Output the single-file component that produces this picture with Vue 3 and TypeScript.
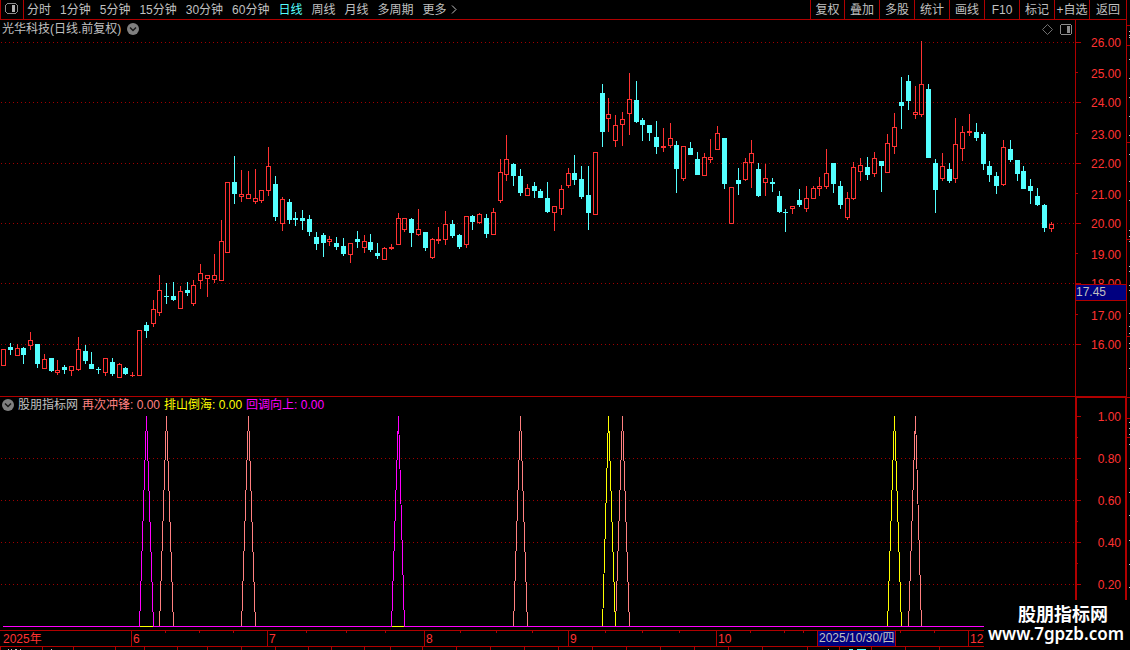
<script setup lang="ts">
import { ref } from 'vue'

type Direction = 'u' | 'd'
type Candle = [x: number, high: number, top: number, bottom: number, low: number, dir: Direction]

interface Mark {
  y: number
  text: string
}
interface Signal {
  name: string
  tone: string
  value: string
}
interface Spike {
  tone: string
  left: number
  peak: number
  right: number
}

const periods = ['分时', '1分钟', '5分钟', '15分钟', '30分钟', '60分钟', '日线', '周线', '月线', '多周期', '更多']
const activePeriod = ref('日线')
const tools = ['复权', '叠加', '多股', '统计', '画线', 'F10', '标记', '+自选', '返回']

const PLOT_WIDTH = 1075
const MAIN_TOP = 20
const MAIN_HEIGHT = 376
const SUB_TOP = 396
const SUB_HEIGHT = 234
const BASELINE = 626

const candles: Candle[] = [
  [3, 349, 349, 366, 366, 'u'], [10, 343, 347, 350, 355, 'd'], [17, 344, 348, 356, 356, 'u'],
  [23, 347, 348, 355, 364, 'd'], [30, 332, 340, 346, 350, 'u'], [37, 344, 344, 364, 368, 'd'],
  [44, 354, 359, 369, 369, 'u'], [51, 358, 358, 371, 372, 'd'], [57, 360, 370, 373, 375, 'u'],
  [64, 365, 367, 370, 374, 'd'], [71, 366, 366, 371, 376, 'u'], [78, 337, 349, 370, 371, 'u'],
  [85, 345, 351, 361, 364, 'd'], [91, 352, 364, 369, 369, 'd'], [98, 367, 369, 370, 374, 'd'],
  [105, 358, 358, 373, 376, 'u'], [112, 358, 362, 374, 376, 'd'], [119, 363, 364, 378, 378, 'u'],
  [125, 367, 368, 374, 375, 'd'], [132, 372, 375, 376, 377, 'u'], [139, 330, 330, 376, 376, 'u'],
  [146, 322, 325, 331, 338, 'd'], [153, 300, 309, 324, 327, 'u'], [159, 275, 290, 313, 316, 'u'],
  [166, 283, 296, 297, 304, 'd'], [173, 282, 296, 300, 301, 'd'], [180, 286, 291, 309, 309, 'u'],
  [187, 282, 290, 293, 296, 'd'], [193, 280, 285, 304, 306, 'u'], [200, 264, 273, 281, 289, 'u'],
  [207, 275, 275, 279, 297, 'u'], [214, 254, 275, 280, 283, 'u'], [221, 220, 241, 281, 281, 'u'],
  [227, 182, 182, 253, 253, 'u'], [234, 156, 182, 194, 204, 'd'], [241, 170, 194, 197, 202, 'u'],
  [248, 171, 194, 199, 199, 'u'], [255, 169, 198, 202, 204, 'u'], [261, 190, 190, 201, 203, 'u'],
  [268, 147, 166, 191, 196, 'u'], [275, 176, 184, 217, 221, 'd'], [282, 197, 199, 224, 231, 'u'],
  [289, 199, 202, 220, 224, 'd'], [295, 212, 218, 220, 226, 'd'], [302, 210, 218, 221, 230, 'd'],
  [309, 215, 219, 232, 236, 'd'], [316, 232, 237, 244, 250, 'd'], [323, 233, 235, 243, 257, 'd'],
  [329, 236, 239, 242, 246, 'u'], [336, 237, 243, 247, 250, 'd'], [343, 238, 246, 254, 256, 'd'],
  [350, 243, 243, 255, 263, 'u'], [357, 231, 239, 242, 248, 'd'], [364, 235, 241, 248, 253, 'u'],
  [370, 234, 242, 250, 252, 'd'], [377, 243, 253, 256, 259, 'd'], [384, 247, 248, 260, 260, 'u'],
  [391, 244, 247, 249, 250, 'u'], [398, 213, 218, 245, 245, 'u'], [404, 218, 218, 230, 232, 'u'],
  [411, 218, 219, 233, 247, 'd'], [418, 209, 229, 235, 236, 'u'], [425, 232, 232, 248, 251, 'd'],
  [432, 238, 239, 258, 259, 'u'], [438, 227, 239, 241, 244, 'u'], [445, 211, 224, 240, 245, 'u'],
  [452, 220, 224, 236, 238, 'd'], [459, 234, 235, 247, 249, 'd'], [466, 216, 216, 245, 248, 'u'],
  [472, 215, 216, 222, 230, 'd'], [479, 213, 214, 223, 224, 'u'], [486, 214, 218, 234, 238, 'd'],
  [493, 208, 212, 235, 235, 'u'], [500, 159, 172, 201, 203, 'u'], [506, 135, 159, 175, 181, 'u'],
  [513, 163, 164, 176, 186, 'd'], [520, 169, 176, 193, 196, 'd'], [527, 184, 188, 196, 196, 'u'],
  [534, 182, 186, 191, 198, 'd'], [540, 189, 191, 198, 198, 'd'], [547, 182, 198, 212, 213, 'd'],
  [554, 206, 206, 213, 231, 'u'], [561, 185, 189, 209, 215, 'u'], [568, 168, 173, 186, 188, 'u'],
  [574, 155, 173, 180, 185, 'd'], [581, 166, 179, 197, 199, 'd'], [588, 166, 195, 213, 230, 'd'],
  [595, 152, 152, 215, 215, 'u'], [602, 84, 93, 132, 147, 'd'], [608, 98, 114, 119, 132, 'u'],
  [615, 115, 125, 141, 147, 'u'], [622, 112, 119, 125, 146, 'u'], [629, 73, 99, 114, 135, 'u'],
  [636, 81, 100, 122, 123, 'd'], [642, 118, 120, 125, 141, 'd'], [649, 125, 125, 133, 141, 'd'],
  [656, 121, 137, 147, 154, 'd'], [663, 128, 146, 148, 152, 'u'], [670, 123, 138, 146, 148, 'u'],
  [676, 141, 145, 169, 193, 'd'], [683, 146, 146, 179, 181, 'u'], [690, 142, 148, 155, 155, 'd'],
  [697, 152, 159, 175, 175, 'd'], [704, 153, 157, 176, 176, 'u'], [710, 139, 157, 160, 163, 'u'],
  [717, 126, 133, 150, 150, 'u'], [724, 138, 138, 184, 189, 'd'], [731, 187, 187, 224, 224, 'u'],
  [738, 168, 180, 184, 195, 'd'], [745, 158, 162, 180, 181, 'u'], [751, 140, 153, 163, 188, 'u'],
  [758, 163, 169, 196, 197, 'd'], [765, 164, 178, 183, 196, 'u'], [772, 178, 182, 184, 192, 'd'],
  [779, 191, 196, 212, 213, 'd'], [785, 209, 212, 213, 232, 'd'], [792, 206, 206, 209, 214, 'u'],
  [799, 189, 200, 205, 207, 'd'], [806, 186, 198, 209, 212, 'u'], [813, 186, 188, 199, 199, 'u'],
  [819, 177, 186, 189, 196, 'u'], [826, 149, 173, 187, 189, 'u'], [833, 163, 163, 184, 193, 'd'],
  [840, 181, 186, 205, 209, 'd'], [847, 192, 198, 218, 220, 'u'], [853, 162, 167, 199, 200, 'u'],
  [860, 158, 165, 172, 181, 'u'], [867, 157, 167, 175, 180, 'd'], [874, 152, 158, 174, 177, 'u'],
  [881, 161, 161, 166, 192, 'd'], [887, 134, 143, 173, 173, 'u'], [894, 113, 127, 147, 154, 'u'],
  [901, 77, 102, 106, 129, 'd'], [908, 75, 81, 101, 110, 'd'], [915, 86, 112, 115, 119, 'u'],
  [921, 41, 84, 115, 117, 'u'], [928, 84, 89, 158, 158, 'd'], [935, 159, 163, 190, 213, 'd'],
  [942, 153, 166, 179, 181, 'u'], [949, 163, 169, 181, 183, 'd'], [955, 118, 144, 179, 183, 'u'],
  [962, 126, 132, 149, 161, 'u'], [969, 114, 131, 133, 136, 'u'], [976, 123, 132, 138, 141, 'd'],
  [983, 132, 134, 164, 170, 'd'], [989, 161, 166, 175, 182, 'd'], [996, 172, 176, 186, 194, 'd'],
  [1003, 140, 147, 185, 186, 'u'], [1010, 140, 149, 160, 162, 'd'], [1017, 160, 160, 174, 181, 'd'],
  [1023, 166, 171, 189, 189, 'd'], [1030, 179, 186, 191, 204, 'd'], [1037, 188, 196, 205, 206, 'd'],
  [1044, 204, 205, 228, 232, 'd'], [1051, 222, 224, 229, 232, 'u'],
]

/* Rising bars are hollow: the wick stops at the body and the body is a one-pixel ring. */
function candlePath([x, high, top, bottom, low, dir]: Candle): string {
  const left = x - 2
  const right = x + 3
  const wick = (from: number, to: number) => (to > from ? `M${x} ${from}h1V${to}h-1z` : '')
  let path = wick(high, top) + wick(bottom, low) + `M${left} ${top}H${right}V${bottom}H${left}z`
  if (dir === 'u' && bottom - top > 2) {
    path += `M${left + 1} ${top + 1}V${bottom - 1}H${right - 1}V${top + 1}z`
  }
  return path
}

const risingPath = candles.filter((c) => c[5] === 'u').map(candlePath).join('')
const fallingPath = candles.filter((c) => c[5] === 'd').map(candlePath).join('')

const mainGrid = [42, 102, 163, 223, 283, 344]
const mainMinor = [72, 133, 193, 253, 314]
const subGrid = [458, 500, 542, 584]
const subMajor = [416, ...subGrid]
const subMinor = [437, 479, 521, 563]

const priceMarks: Mark[] = [
  { y: 43, text: '26.00' }, { y: 74, text: '25.00' }, { y: 103, text: '24.00' },
  { y: 135, text: '23.00' }, { y: 164, text: '22.00' }, { y: 195, text: '21.00' },
  { y: 224, text: '20.00' }, { y: 255, text: '19.00' }, { y: 284, text: '18.00' },
  { y: 316, text: '17.00' }, { y: 345, text: '16.00' },
]
const subMarks: Mark[] = [
  { y: 417, text: '1.00' }, { y: 459, text: '0.80' }, { y: 501, text: '0.60' },
  { y: 543, text: '0.40' }, { y: 585, text: '0.20' },
]

const signals: Signal[] = [
  { name: '再次冲锋', tone: 'salmon', value: '0.00' },
  { name: '排山倒海', tone: 'yellow', value: '0.00' },
  { name: '回调向上', tone: 'magenta', value: '0.00' },
]

const spikes: Spike[] = [
  { tone: 'salmon', left: 159, peak: 166, right: 173 },
  { tone: 'salmon', left: 241, peak: 248, right: 255 },
  { tone: 'salmon', left: 513, peak: 520, right: 527 },
  { tone: 'salmon', left: 615, peak: 622, right: 629 },
  { tone: 'salmon', left: 908, peak: 915, right: 921 },
  { tone: 'yellow', left: 602, peak: 608, right: 615 },
  { tone: 'yellow', left: 887, peak: 894, right: 901 },
  { tone: 'magenta', left: 139, peak: 146, right: 153 },
  { tone: 'magenta', left: 391, peak: 398, right: 404 },
]
const spikePoints = (s: Spike) =>
  `${s.left + 0.5},${BASELINE + 0.5} ${s.peak + 0.5},416 ${s.right + 0.5},${BASELINE + 0.5}`

const months = [
  { x: 1, text: '2025年' }, { x: 131, text: '6' }, { x: 267, text: '7' }, { x: 424, text: '8' },
  { x: 568, text: '9' }, { x: 716, text: '10' }, { x: 968, text: '12' },
]
const monthTicks = [165, 199, 233, 306, 346, 385, 460, 496, 532, 605, 642, 679, 750, 784, 803, 900, 934]
const footTicks = [0, 42, 73, 115, 144, 177, 207, 241, 275, 308, 331, 364, 390, 422, 456, 490, 524, 558, 592, 626, 660, 694, 728, 762, 807, 839, 871, 905, 939]

const edgeRed = [25, 45, 142, 239, 336, 397, 418, 437]
const edgeWhite = [31, 35, 37, 59, 78, 97, 116, 135, 154, 181, 200, 230, 236, 241, 266, 271, 285, 290, 313, 326, 333, 343, 348, 368, 422, 428, 434, 444, 468, 492, 515, 540, 564, 587]

const percent = (value: number, start: number, size: number) => `${((value - start) / size) * 100}%`
</script>

<template>
  <main class="terminal">
    <header class="toolbar">
      <button class="layout-btn" aria-label="布局">
        <svg width="13" height="11" viewBox="0 0 13 11" shape-rendering="crispEdges">
          <path d="M2 0h9v1h1v1h1v7h-1v1h-1v1H2v-1H1V9H0V2h1V1h1zM2 1v1H1v7h1v1h9V9h1V2h-1V1z" fill="#8c8c8c" fill-rule="evenodd" />
          <path d="M7 2h3v7H7z" fill="#b0b0b0" />
        </svg>
      </button>
      <nav class="periods" aria-label="周期">
        <button
          v-for="p in periods"
          :key="p"
          class="period"
          :class="{ active: p === activePeriod }"
          @click="activePeriod = p"
        >{{ p }}<svg v-if="p === '更多'" class="more" width="6" height="9" viewBox="0 0 6 9"><path d="M1 0.5l4 4-4 4" fill="none" stroke="currentColor" /></svg></button>
      </nav>
      <nav class="tools" aria-label="工具">
        <button v-for="t in tools" :key="t" class="tool">{{ t }}</button>
      </nav>
    </header>

    <section class="plot">
      <svg class="canvas" :viewBox="`0 ${MAIN_TOP} ${PLOT_WIDTH} ${MAIN_HEIGHT}`" preserveAspectRatio="none" shape-rendering="crispEdges">
        <line v-for="y in mainGrid" :key="y" class="grid-line" x1="1" :x2="PLOT_WIDTH" :y1="y + 0.5" :y2="y + 0.5" />
        <path :d="risingPath" class="rising" />
        <path :d="fallingPath" class="falling" />
      </svg>
      <div class="caption title">
        <span>光华科技(日线.前复权)</span>
        <button class="round" aria-label="展开">
          <svg width="12" height="12" viewBox="0 0 12 12"><circle cx="6" cy="6" r="6" fill="#808080" /><path d="M3 4.5l3 3 3-3" fill="none" stroke="#181818" stroke-width="1.5" /></svg>
        </button>
      </div>
      <div class="corner">
        <button class="round" aria-label="标记点">
          <svg width="11" height="11" viewBox="0 0 11 11"><path d="M5.5 0.5l5 5-5 5-5-5z" fill="none" stroke="#707070" /></svg>
        </button>
        <button class="round" aria-label="侧栏">
          <svg width="12" height="11" viewBox="0 0 12 11" shape-rendering="crispEdges">
            <path d="M1 0h10v1h1v9h-1v1H1v-1H0V1h1zM1 1v9h10V1z" fill="#8c8c8c" fill-rule="evenodd" />
            <path d="M7 2h3v7H7z" fill="#8c8c8c" />
          </svg>
        </button>
      </div>
    </section>

    <aside class="axis">
      <svg class="canvas" :viewBox="`0 ${MAIN_TOP} 50 ${MAIN_HEIGHT}`" preserveAspectRatio="none" shape-rendering="crispEdges">
        <rect v-for="y in mainGrid" :key="y" x="0" :y="y" width="5" height="1" fill="#b00000" />
        <rect v-for="y in mainMinor" :key="y" x="0" :y="y" width="2" height="1" fill="#b00000" />
      </svg>
      <span v-for="m in priceMarks" :key="m.text" class="mark" :style="{ top: percent(m.y, MAIN_TOP, MAIN_HEIGHT) }">{{ m.text }}</span>
      <output class="cursor-price" :style="{ top: percent(284, MAIN_TOP, MAIN_HEIGHT) }">17.45</output>
    </aside>

    <section class="plot sub">
      <svg class="canvas" :viewBox="`0 ${SUB_TOP} ${PLOT_WIDTH} ${SUB_HEIGHT}`" preserveAspectRatio="none" shape-rendering="crispEdges">
        <rect x="0" :y="SUB_TOP" :width="PLOT_WIDTH" height="1" fill="#b00000" />
        <line v-for="y in subGrid" :key="y" class="grid-line" x1="1" :x2="PLOT_WIDTH" :y1="y + 0.5" :y2="y + 0.5" />
        <polyline v-for="s in spikes" :key="s.peak" :points="spikePoints(s)" class="spike" :class="s.tone" />
        <rect x="3" :y="BASELINE" :width="PLOT_WIDTH - 3" height="1" fill="#ff00ff" />
        <rect x="140" :y="BASELINE" width="13" height="1" fill="#ffff00" />
        <rect x="392" :y="BASELINE" width="12" height="1" fill="#ffff00" />
      </svg>
      <div class="caption indicator">
        <button class="round" aria-label="指标菜单">
          <svg width="12" height="12" viewBox="0 0 12 12"><circle cx="6" cy="6" r="6" fill="#808080" /><path d="M3 4.5l3 3 3-3" fill="none" stroke="#181818" stroke-width="1.5" /></svg>
        </button>
        <span>股朋指标网</span>
        <span v-for="s in signals" :key="s.name" :class="s.tone">{{ s.name }}: {{ s.value }}</span>
      </div>
    </section>

    <aside class="axis sub-axis">
      <svg class="canvas" :viewBox="`0 ${SUB_TOP} 50 ${SUB_HEIGHT}`" preserveAspectRatio="none" shape-rendering="crispEdges">
        <rect x="0" :y="SUB_TOP" width="50" height="2" fill="#b00000" />
        <rect x="0" :y="SUB_TOP" width="1" :height="SUB_HEIGHT" fill="#b00000" />
        <rect x="49" :y="SUB_TOP" width="1" :height="SUB_HEIGHT" fill="#b00000" />
        <rect v-for="y in subMajor" :key="y" x="0" :y="y" width="5" height="1" fill="#b00000" />
        <rect v-for="y in subMinor" :key="y" x="0" :y="y" width="2" height="1" fill="#b00000" />
      </svg>
      <span v-for="m in subMarks" :key="m.text" class="mark" :style="{ top: percent(m.y, SUB_TOP, SUB_HEIGHT) }">{{ m.text }}</span>
    </aside>

    <div class="edge">
      <svg class="canvas" viewBox="0 20 3 610" preserveAspectRatio="none" shape-rendering="crispEdges">
        <rect v-for="y in edgeRed" :key="y" x="0" :y="y" width="3" height="1" fill="#b00000" />
        <rect v-for="y in edgeWhite" :key="y" x="2" :y="y" width="1" height="1" fill="#c0c0c0" />
      </svg>
    </div>

    <footer class="timeline">
      <svg class="canvas" :viewBox="`0 630 ${PLOT_WIDTH} 20`" preserveAspectRatio="none" shape-rendering="crispEdges">
        <rect x="0" y="630" :width="PLOT_WIDTH" height="1" fill="#b00000" />
        <rect x="0" y="646" :width="PLOT_WIDTH" height="1" fill="#b00000" />
        <rect v-for="m in months.slice(1)" :key="m.x" :x="m.x" y="630" width="1" height="16" fill="#b00000" />
        <rect v-for="x in monthTicks" :key="x" :x="x" y="631" width="1" height="2" fill="#b00000" />
        <rect v-for="x in footTicks" :key="x" :x="x" y="647" width="1" height="3" fill="#b00000" />
        <path d="M8 649h1v1h-1zM11 649h1v1h-1zM15 649h2v1h-2zM20 649h1v1h-1zM51 649h1v1h-1zM828 649h1v1h-1z" fill="#c0c0c0" />
        <path d="M849 649h4v1h-4zM857 649h9v1h-9z" fill="#54ffff" />
      </svg>
      <span v-for="m in months" :key="m.x" class="month" :style="{ left: percent(m.x, 0, PLOT_WIDTH) }">{{ m.text }}</span>
      <time class="cursor-date" datetime="2025-10-30" :style="{ left: percent(817, 0, PLOT_WIDTH) }">2025/10/30/四</time>
    </footer>

    <div class="brand">
      <strong>股朋指标网</strong>
      <span>www.7gpzb.com</span>
    </div>
  </main>
</template>

<style>
body {
  margin: 0;
  background: #000;
}
</style>

<style scoped>
.terminal {
  position: relative;
  display: grid;
  grid-template-columns: 1fr 52px 3px;
  grid-template-rows: 20px 376fr 234fr 20px;
  height: 100vh;
  min-height: 400px;
  overflow: hidden;
  background: #000;
  color: #c0c0c0;
  font: 12px/16px "Liberation Sans", "Noto Sans CJK SC", sans-serif;
}
button {
  padding: 0;
  border: 0;
  background: none;
  color: inherit;
  font: inherit;
  white-space: nowrap;
  cursor: pointer;
}
svg {
  display: block;
}
.toolbar {
  grid-column: 1 / 3;
  display: flex;
  border-bottom: 1px solid #b00000;
  border-right: 1px solid #b00000;
}
.layout-btn {
  display: flex;
  align-items: center;
  justify-content: center;
  width: 24px;
  padding-right: 2px;
  padding-bottom: 2px;
  box-sizing: border-box;
  border-left: 1px solid #b00000;
  border-right: 1px solid #b00000;
}
.periods {
  flex: 1;
  display: flex;
  gap: 9px;
  padding-left: 3px;
}
.period {
  display: flex;
  align-items: center;
}
.period.active {
  color: #54ffff;
}
.more {
  margin-left: 4px;
}
.tools {
  display: flex;
}
.tool {
  box-sizing: border-box;
  width: 35px;
  border-left: 1px solid #b00000;
}
.tool:first-child {
  width: 34px;
}
.tool:last-child {
  width: 37px;
}
.plot,
.axis,
.edge,
.timeline {
  position: relative;
  min-width: 0;
  min-height: 0;
}
.plot {
  grid-column: 1;
}
.canvas {
  position: absolute;
  inset: 0;
  width: 100%;
  height: 100%;
}
.grid-line {
  stroke: #a00000;
  stroke-dasharray: 1 3;
}
.rising {
  fill: #ff3232;
  fill-rule: evenodd;
}
.falling {
  fill: #54ffff;
}
.spike {
  fill: none;
  stroke: currentColor;
}
.salmon {
  color: #ff8080;
}
.yellow {
  color: #ffff00;
}
.magenta {
  color: #ff00ff;
}
.caption {
  position: absolute;
  top: 1px;
  left: 2px;
  display: flex;
  align-items: center;
  gap: 4px;
  white-space: nowrap;
}
.title {
  gap: 6px;
}
.round {
  display: flex;
}
.corner {
  position: absolute;
  top: 4px;
  right: 3px;
  display: flex;
  gap: 7px;
}
.axis {
  grid-column: 2;
  box-sizing: border-box;
  border-left: 1px solid #b00000;
  border-right: 1px solid #b00000;
  color: #ff3232;
}
.mark {
  position: absolute;
  right: 5px;
  transform: translateY(-50%);
}
.cursor-price {
  position: absolute;
  left: 0;
  right: 0;
  border-top: 1px solid #b00000;
  border-bottom: 1px solid #b00000;
  background: #000080;
  color: #c0c0c0;
  line-height: 15px;
}
.edge {
  grid-column: 3;
  grid-row: 2 / 4;
}
.timeline {
  grid-column: 1;
  color: #ff3232;
}
.month {
  position: absolute;
  top: 1px;
  padding-left: 2px;
}
.cursor-date {
  position: absolute;
  top: 0;
  padding: 0 1px;
  border: 1px solid #b00000;
  background: #000080;
  color: #c0c0c0;
  line-height: 15px;
  white-space: nowrap;
}
.brand {
  position: absolute;
  right: 0;
  bottom: 0;
  display: flex;
  flex-direction: column;
  align-items: flex-end;
  box-sizing: border-box;
  width: 146px;
  height: 50px;
  padding-top: 5px;
  padding-right: 6px;
  background: #000;
  color: #fff;
}
.brand strong {
  padding-right: 16px;
  font-size: 18px;
  line-height: 20px;
}
.brand span {
  font: 600 17px/18px "Noto Sans", sans-serif;
}
</style>
